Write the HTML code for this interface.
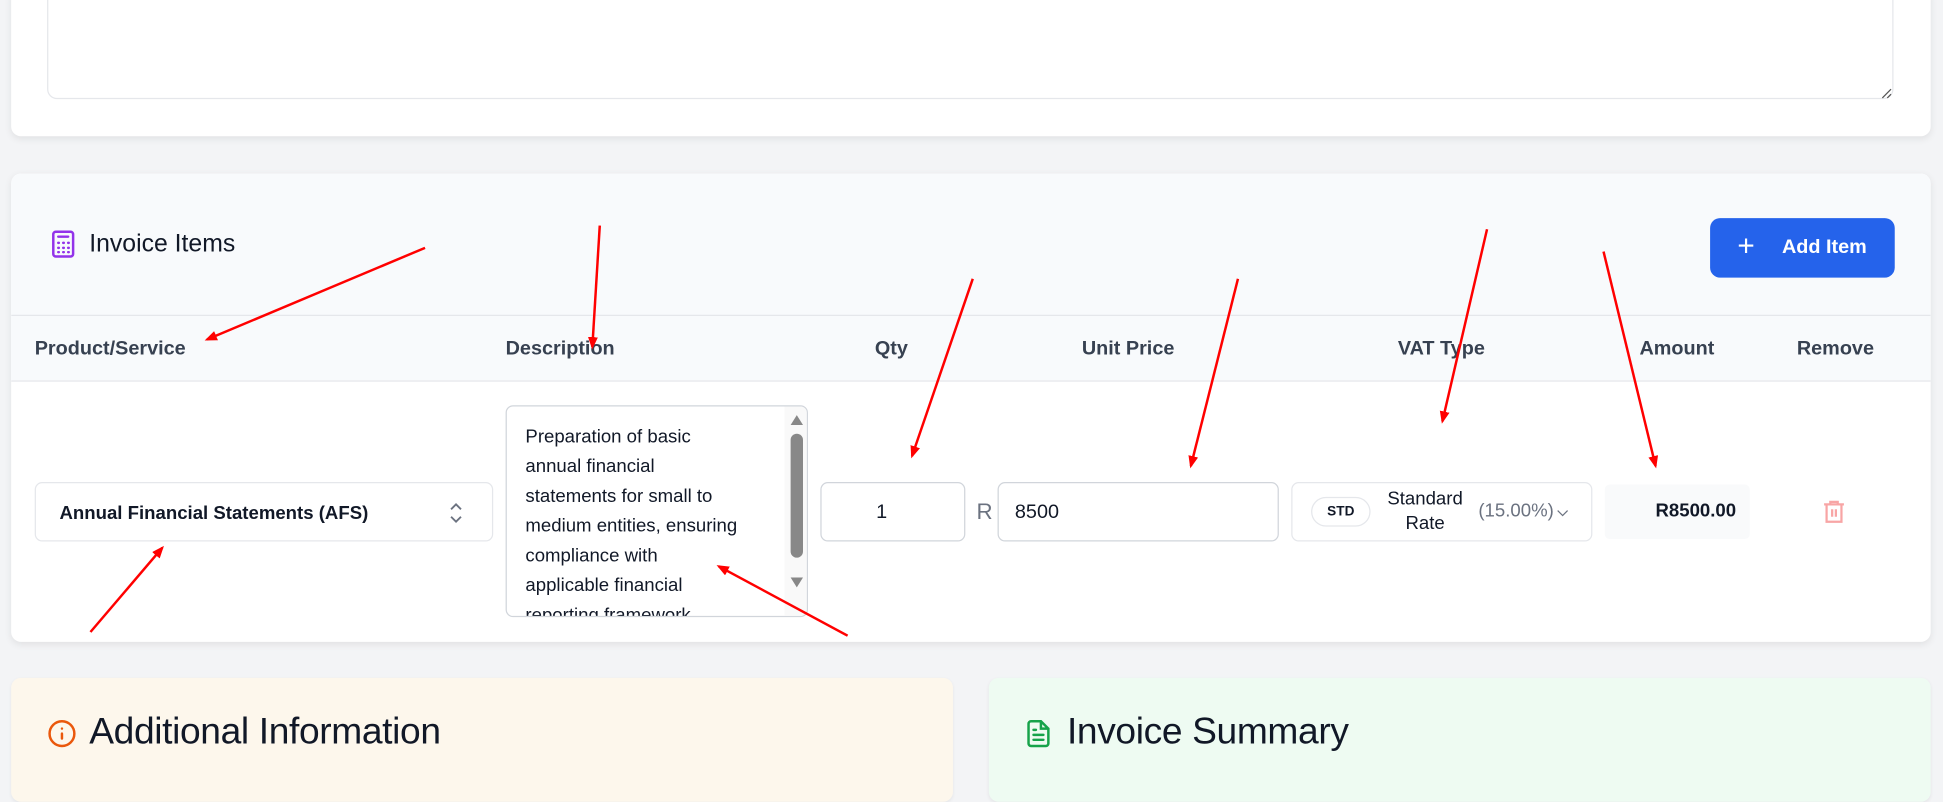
<!DOCTYPE html>
<html><head><meta charset="utf-8"><style>
html,body{margin:0;padding:0;width:1943px;height:783px;overflow:hidden;background:#f3f4f6;font-family:"Liberation Sans",sans-serif;}
#w{position:absolute;left:0;top:0;width:1568px;height:632px;transform:scale(1.2392);transform-origin:0 0;}
.a{position:absolute;}
.card{background:#fff;box-shadow:0 2px 6px rgba(0,0,0,.08);}
.th{position:absolute;top:273px;font-size:16px;font-weight:600;color:#374151;white-space:nowrap}
.inp{position:absolute;background:#fff;border:1px solid #d1d5db;border-radius:6px;box-sizing:border-box;}
</style></head><body><div id="w">
<div class="a card" style="left:9px;top:-10px;width:1549px;height:120px;border-radius:8px"></div>
<div class="a" style="left:38px;top:-10px;width:1490px;height:90px;border:1px solid #e5e7eb;border-radius:8px;box-sizing:border-box"></div>
<svg class="a" style="left:1517px;top:70px" width="10" height="10"><path d="M2 9L9 2M6 9L9 6" stroke="#555" stroke-width="1"/></svg>

<div class="a card" style="left:9px;top:140px;width:1549px;height:378px;border-radius:8px;overflow:hidden">
 <div class="a" style="left:0;top:0;width:100%;height:167px;background:#f8fafc"></div>
 <div class="a" style="left:0;top:114px;width:100%;height:1px;background:#e5e7eb"></div>
 <div class="a" style="left:0;top:167px;width:100%;height:1px;background:#e5e7eb"></div>
</div>
<svg class="a" style="left:39px;top:185px" width="24" height="24" viewBox="0 0 24 24" fill="none" stroke="#9333ea" stroke-width="2" stroke-linecap="round"><rect x="4" y="2" width="16" height="20" rx="2"/><path d="M8 6h8M8 11h.5M12 11h.5M16 11h.5M8 15h.5M12 15h.5M16 15h.5M8 18.5h.5M12 18.5h.5M16 18.5h.5"/></svg>
<div class="a" style="left:72px;top:186px;font-size:20px;color:#111827;font-weight:500">Invoice Items</div>
<div class="a" style="left:1380px;top:176px;width:149px;height:48px;background:#2563eb;border-radius:8px;color:#fff">
 <div class="a" style="left:22px;top:9px;font-size:24px;font-weight:300">+</div>
 <div class="a" style="left:58px;top:15px;font-size:16px;font-weight:600">Add Item</div>
</div>
<div class="th" style="left:28px">Product/Service</div>
<div class="th" style="left:408px">Description</div>
<div class="th" style="left:706px">Qty</div>
<div class="th" style="left:873px">Unit Price</div>
<div class="th" style="left:1128px">VAT Type</div>
<div class="th" style="left:1323px">Amount</div>
<div class="th" style="left:1450px">Remove</div>

<div class="inp" style="left:28px;top:389px;width:370px;height:48px;border-color:#e5e7eb">
 <div class="a" style="left:19px;top:16px;font-size:15px;font-weight:700;color:#111827;white-space:nowrap">Annual Financial Statements (AFS)</div>
 <svg class="a" style="left:333px;top:15px" width="12" height="18" viewBox="0 0 12 18" fill="none" stroke="#6b7280" stroke-width="1.5"><path d="M2 6l4-4 4 4M2 12l4 4 4-4"/></svg>
</div>
<div class="inp" style="left:408px;top:327px;width:244px;height:171px;overflow:hidden">
 <div class="a" style="left:15px;top:13px;width:210px;font-size:15px;line-height:24px;color:#111827;white-space:nowrap">Preparation of basic<br>annual financial<br>statements for small to<br>medium entities, ensuring<br>compliance with<br>applicable financial<br>reporting framework.</div>
 <div class="a" style="left:224px;top:0;width:20px;height:171px;background:#f9f9f9"></div>
 <svg class="a" style="left:227px;top:4px" width="14" height="150"><path d="M2 11L7 3 12 11Z" fill="#888"/><rect x="2" y="18" width="10" height="100" rx="5" fill="#888"/><path d="M2 134L7 142 12 134Z" fill="#888"/></svg>
</div>
<div class="inp" style="left:662px;top:389px;width:117px;height:48px"><div class="a" style="left:44px;top:15px;font-size:16px;color:#111827">1</div></div>
<div class="a" style="left:788px;top:403px;font-size:18px;color:#6b7280">R</div>
<div class="inp" style="left:805px;top:389px;width:227px;height:48px"><div class="a" style="left:13px;top:15px;font-size:16px;color:#111827">8500</div></div>
<div class="inp" style="left:1042px;top:389px;width:243px;height:48px;border-color:#e5e7eb">
 <div class="a" style="left:15px;top:11px;width:48px;height:24px;border:1px solid #e5e7eb;border-radius:12px;box-sizing:border-box;font-size:11px;font-weight:700;text-align:center;line-height:22px;color:#111827">STD</div>
 <div class="a" style="left:70px;top:3px;width:74px;text-align:center;font-size:15px;line-height:20px;color:#111827">Standard Rate</div>
 <div class="a" style="left:150px;top:14px;font-size:15px;color:#6b7280;width:63px;overflow:hidden;white-space:nowrap">(15.00%)</div>
 <svg class="a" style="left:213px;top:20px" width="10" height="8"><path d="M1 2l4 4 4-4" stroke="#6b7280" fill="none"/></svg>
</div>
<div class="a" style="left:1295px;top:391px;width:117px;height:44px;background:#f9fafb;border-radius:4px"><div class="a" style="right:11px;top:13px;font-size:15px;font-weight:700;color:#111827">R8500.00</div></div>
<svg class="a" style="left:1471px;top:403px" width="18" height="20" viewBox="0 0 18 20" fill="none" stroke="#f8a5a5" stroke-width="1.8"><path d="M1 4h16M6 4V2h6v2M3 4v14h12V4M7.5 8v6M10.5 8v6"/></svg>

<div class="a" style="left:9px;top:547px;width:760px;height:100px;background:#fdf7ec;border-radius:8px;box-shadow:0 1px 3px rgba(0,0,0,.06)"></div>
<div class="a" style="left:798px;top:547px;width:760px;height:100px;background:#eefbf2;border-radius:8px;box-shadow:0 1px 3px rgba(0,0,0,.06)"></div>
<svg class="a" style="left:38px;top:580px" width="24" height="24" viewBox="0 0 24 24" fill="none" stroke="#ea580c" stroke-width="2" stroke-linecap="round"><circle cx="12" cy="12" r="10"/><path d="M12 16v-4M12 8h.01"/></svg>
<div class="a" style="left:72px;top:574px;font-size:30px;color:#111827;font-weight:500;letter-spacing:-0.3px">Additional Information</div>
<svg class="a" style="left:827px;top:580px" width="22" height="24" viewBox="0 0 22 24" fill="none" stroke="#16a34a" stroke-width="2" stroke-linecap="round"><path d="M13 2H5a2 2 0 0 0-2 2v16a2 2 0 0 0 2 2h12a2 2 0 0 0 2-2V8z M13 2v6h6M7 13h8M7 17h8M7 9h2"/></svg>
<div class="a" style="left:861px;top:574px;font-size:30px;color:#111827;font-weight:500;letter-spacing:-0.3px">Invoice Summary</div>

<svg class="a" style="left:0;top:0" width="1568" height="632">
<defs><marker id="m" markerWidth="10" markerHeight="10" refX="8" refY="4" orient="auto" markerUnits="userSpaceOnUse"><path d="M0 0L10 4 0 8Z" fill="#f00"/></marker></defs>
<g stroke="#f00" stroke-width="2" marker-end="url(#m)">
<line x1="343" y1="200" x2="167" y2="274"/>
<line x1="484" y1="182" x2="478" y2="280"/>
<line x1="785" y1="225" x2="736" y2="368"/>
<line x1="999" y1="225" x2="961" y2="376"/>
<line x1="1200" y1="185" x2="1164" y2="340"/>
<line x1="1294" y1="203" x2="1336" y2="376"/>
<line x1="73" y1="510" x2="131" y2="442"/>
<line x1="684" y1="513" x2="580" y2="457"/>
</g></svg>
</div></body></html>
